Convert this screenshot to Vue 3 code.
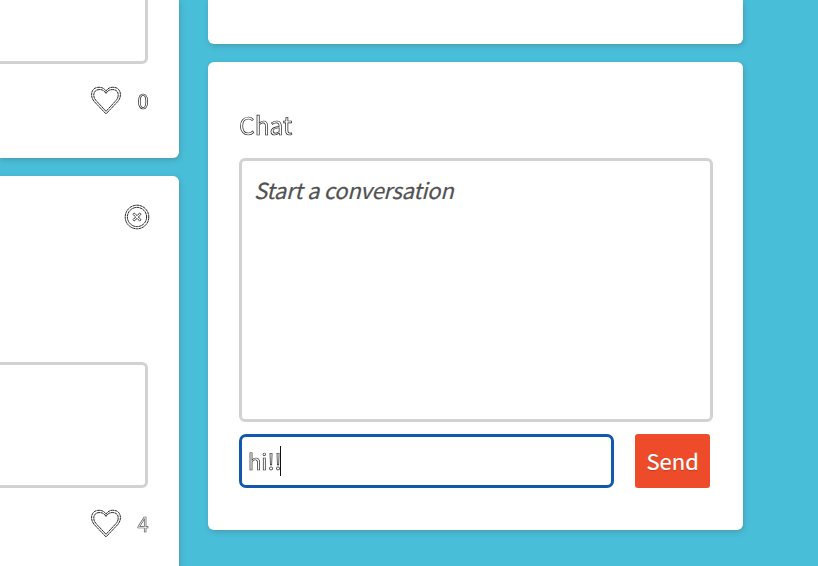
<script setup>
import { ref } from 'vue'
const message = ref('hi!!')
</script>

<template>
  <main class="board">
    <section class="column feed">
      <article class="card post first">
        <div class="field upper"></div>
        <footer class="likes">
          <svg class="heart" viewBox="0 0 32 30"><path d="M16 27.9 L4.2 15.5 C-.1 10.6 .8 2.3 7.5 1.4 C11.4 .8 14.3 2.2 16 5.3 C17.7 2.2 20.6 .8 24.5 1.4 C31.2 2.3 32.1 10.6 27.8 15.5 Z" /><path d="M16 25.3 L6.1 14.6 C2.4 10.7 3.2 4.4 8 3.7 C11.7 3.1 14.4 4.4 16 7.6 C17.6 4.4 20.3 3.1 24 3.7 C28.8 4.4 29.6 10.7 25.9 14.6 Z" /></svg>
          <span class="count outline">0</span>
        </footer>
      </article>
      <article class="card post second">
        <svg class="close" viewBox="0 0 26 26"><circle cx="13" cy="13" r="11.8" /><circle cx="13" cy="13" r="9.6" /><path d="M9 10.3 L10.3 9 L13 11.6 L15.7 9 L17 10.3 L14.4 13 L17 15.7 L15.7 17 L13 14.4 L10.3 17 L9 15.7 L11.6 13 Z" /></svg>
        <div class="field lower"></div>
        <footer class="likes">
          <svg class="heart" viewBox="0 0 32 30"><path d="M16 27.9 L4.2 15.5 C-.1 10.6 .8 2.3 7.5 1.4 C11.4 .8 14.3 2.2 16 5.3 C17.7 2.2 20.6 .8 24.5 1.4 C31.2 2.3 32.1 10.6 27.8 15.5 Z" /><path d="M16 25.3 L6.1 14.6 C2.4 10.7 3.2 4.4 8 3.7 C11.7 3.1 14.4 4.4 16 7.6 C17.6 4.4 20.3 3.1 24 3.7 C28.8 4.4 29.6 10.7 25.9 14.6 Z" /></svg>
          <span class="count outline faint">4</span>
        </footer>
      </article>
    </section>

    <section class="column side">
      <div class="card previous"></div>
      <div class="card chat">
        <h2 class="outline">Chat</h2>
        <div class="conversation"><em>Start a conversation</em></div>
        <form class="composer" @submit.prevent>
          <label class="entry"><span class="outline">{{ message }}</span><i class="caret"></i></label>
          <button>Send</button>
        </form>
      </div>
    </section>
  </main>
</template>

<style>
body { background: #49bed8; }
</style>

<style scoped>
* { box-sizing: border-box; }
.board {
  width: 818px; height: 566px; overflow: hidden; background: #49bed8;
  display: flex; gap: 29.5px;
  font-family: "Noto Sans CJK SC", "Noto Sans", sans-serif;
}
.column { display: flex; flex-direction: column; gap: 18px; flex: none; }
.feed { width: 178.8px; }
.side { width: 535px; }
.card { background: #fff; flex: none; border-radius: 6px; box-shadow: 1px 2px 5px rgba(70, 100, 110, .36); }
.post { border-top-left-radius: 0; border-bottom-left-radius: 0; }
.first { height: 157.5px; border-top-right-radius: 0; }
.second { height: 400px; padding-top: 28px; }
.field { width: 148.4px; border: 3px solid #d2d2d2; border-left: 0; }
.upper { height: 64px; border-top: 0; border-radius: 0 0 6px 0; }
.lower { height: 126px; border-radius: 0 6px 6px 0; margin-top: 132px; }
.likes { width: 148.5px; height: 30px; margin-top: 21.5px; display: flex; align-items: center; justify-content: flex-end; gap: 14.5px; }
.heart { width: 32px; height: 30px; display: block; }
.heart path, .close circle, .close path { fill: none; stroke: #111; stroke-width: .9; stroke-dasharray: 3 .4; }
.close { display: block; width: 26px; height: 26px; margin-left: 123.6px; }
.count { width: 12px; font-size: 20px; line-height: 28px; text-align: center; }
.outline { color: #fff; -webkit-text-stroke: .7px #222; will-change: transform; }
.faint { -webkit-text-stroke-color: #555; }
.previous { height: 44px; border-radius: 0 0 6px 6px; }
.chat { height: 468px; padding: 44px 30px 0 30.4px; }
h2 { margin: 0; height: 52px; font-size: 24.6px; font-weight: 400; line-height: 36px; }
.conversation { height: 264px; border: 3px solid #d2d2d2; border-radius: 6px; padding: 11px 12.4px; color: #515151; font-size: 22px; line-height: 34px; }
em { letter-spacing: -.27px; -webkit-text-stroke: .2px #515151; }
.composer { display: flex; justify-content: space-between; margin-top: 12px; width: 471.5px; }
.entry { width: 375px; height: 54px; border: 3px solid #1259ae; border-radius: 7px; padding-left: 6px; display: flex; align-items: center; font-size: 22px; line-height: 32px; }
.entry .outline { margin-top: -3px; }
.caret { width: 1px; height: 30px; background: #111; margin-left: -1.4px; }
button { border: 0; padding: 0 0 2px; width: 75px; height: 54px; border-radius: 3px; color: #fff; background: #ed4b2a; font: 400 22px/52px "Noto Sans CJK SC", sans-serif; -webkit-text-stroke: .2px #fff; text-shadow: 0 1px 1px rgba(100, 50, 30, .4); }
</style>
